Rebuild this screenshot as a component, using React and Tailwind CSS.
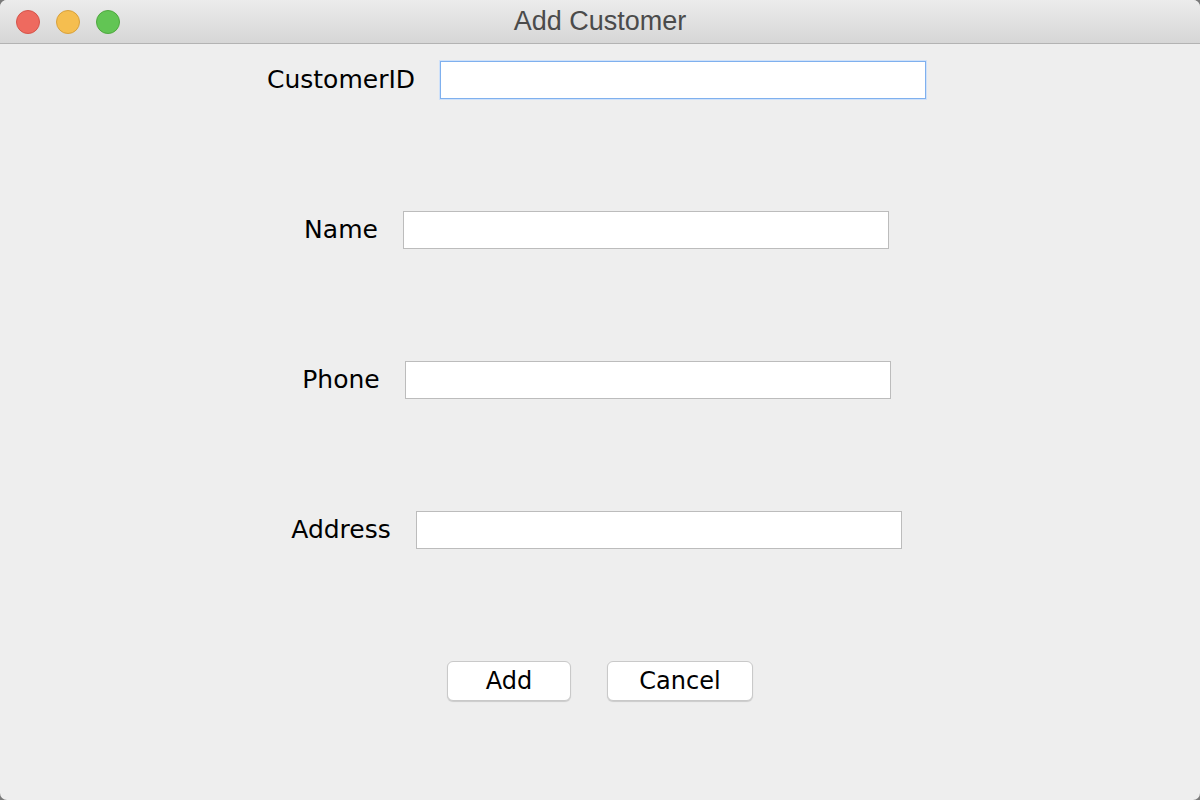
const fields = [
  { label: "CustomerID", focused: true },
  { label: "Name" },
  { label: "Phone" },
  { label: "Address" },
];

function TrafficLights() {
  return (
    <div className="absolute left-[16px] top-[10px] flex gap-[16px]">
      <span className="w-[24px] h-[24px] rounded-full bg-[#ee6a5f] border border-[#d5544a]" />
      <span className="w-[24px] h-[24px] rounded-full bg-[#f5be4f] border border-[#d8a13c]" />
      <span className="w-[24px] h-[24px] rounded-full bg-[#62c554] border border-[#4fa83f]" />
    </div>
  );
}

export default function App() {
  return (
    <div className="w-[1200px] h-[800px] bg-[#7a7a7a]">
      <div className="w-full h-full flex flex-col rounded-[7px] overflow-hidden bg-[#eeeeee]">

        {/* title bar */}
        <div className="relative h-[44px] shrink-0 flex items-center justify-center bg-gradient-to-b from-[#ececec] to-[#d6d6d6] border-b border-[#b3b3b3]">
          <TrafficLights />
          <span className="text-[27px] text-[#4b4b4b] font-['Liberation_Sans',sans-serif]">
            Add Customer
          </span>
        </div>

        {/* form */}
        <div className="flex flex-col items-center pt-[17px] gap-[112px] font-['DejaVu_Sans',sans-serif] text-[25px] text-black">
          {fields.map((f) => (
            <div key={f.label} className="flex items-center justify-center gap-[25px] h-[38px] mr-[7px]">
              <span>{f.label}</span>
              <div
                className={
                  f.focused
                    ? "w-[486px] h-[38px] bg-white border border-[#7fb0ee] shadow-[0_0_0_1px_#cfe1f9]"
                    : "w-[486px] h-[38px] bg-white border border-[#bcbcbc]"
                }
              />
            </div>
          ))}

          <div className="flex items-center justify-center gap-[36px] text-[24px] h-[40px]">
            <button className="w-[124px] h-[40px] rounded-[6px] bg-white border border-[#c9c9c9] shadow-[0_1px_1px_rgba(0,0,0,0.15)]">
              Add
            </button>
            <button className="w-[146px] h-[40px] rounded-[6px] bg-white border border-[#c9c9c9] shadow-[0_1px_1px_rgba(0,0,0,0.15)]">
              Cancel
            </button>
          </div>
        </div>
      </div>
    </div>
  );
}
